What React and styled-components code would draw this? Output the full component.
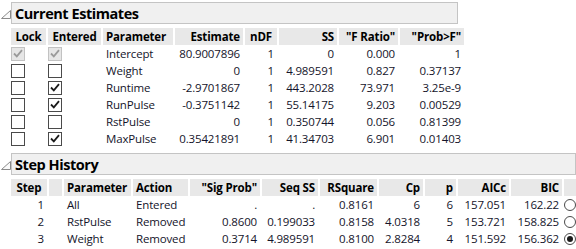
import React from 'react';
import styled, {createGlobalStyle} from "styled-components";

const GlobalStyle = createGlobalStyle`
  html, body {
    margin: 0;
    padding: 0;
    background: #ffffff;
  }
  body {
    font-family: "Open Sans", "Noto Sans", sans-serif;
    color: #14142a;
  }
`

const Page = styled.div`
  width: 576px;
  height: 249px;
  overflow: hidden;
  padding-top: 2px;
  box-sizing: border-box;
`

const Section = styled.div`
  margin-bottom: 6px;
`

const TitleRow = styled.div`
  display: flex;
  align-items: stretch;
`

const Toggle = styled.div`
  width: 11px;
  display: flex;
  align-items: center;
  justify-content: flex-start;
  padding-left: 1px;
  padding-top: 3px;
  box-sizing: border-box;
`

const TitleBar = styled.div`
  width: ${props => props.width}px;
  height: 22px;
  box-sizing: border-box;
  background: #f0f0f0;
  border: 1px solid #c4c4c4;
  display: flex;
  align-items: center;
  padding-left: 3px;
  font-weight: 700;
  font-size: 14.5px;
  letter-spacing: -0.45px;
  color: #000;
`

const Grid = styled.div`
  margin-left: 11px;
  margin-top: 4px;
  display: grid;
  grid-template-columns: ${props => props.cols};
  column-gap: 2px;
  font-size: 11.5px;
  letter-spacing: -0.15px;
`

const Head = styled.div`
  height: 17px;
  background: #e8e8e8;
  font-weight: 700;
  color: #000;
  display: flex;
  align-items: center;
  justify-content: ${props => props.align === "left" ? "flex-start" : props.align === "center" ? "center" : "flex-end"};
  padding: 0 3px;
  white-space: nowrap;
  overflow: hidden;
`

const Cell = styled.div`
  height: 17px;
  display: flex;
  align-items: center;
  justify-content: ${props => props.align === "left" ? "flex-start" : props.align === "center" ? "center" : "flex-end"};
  padding: 0 ${props => props.align === "center" ? 0 : 3}px;
  white-space: nowrap;
`

const BoxCell = styled.div`
  height: 17px;
  display: flex;
  align-items: center;
  padding-left: ${props => props.pad || 0}px;
`

const Box = styled.div`
  width: 14px;
  height: 14px;
  box-sizing: border-box;
  border: 1px solid ${props => props.disabled ? "#c2c2c2" : "#4a4a4a"};
  background: ${props => props.disabled ? "#e6e6e6" : "#fff"};
  display: flex;
  align-items: center;
  justify-content: center;
`

const Radio = styled.div`
  width: 12px;
  height: 12px;
  box-sizing: border-box;
  border-radius: 50%;
  border: 1px solid #4a4a4a;
  background: #fff;
  display: flex;
  align-items: center;
  justify-content: center;
  &::after {
    content: "";
    width: 6px;
    height: 6px;
    border-radius: 50%;
    background: ${props => props.checked ? "#1a1a1a" : "transparent"};
  }
`

const Triangle = () => (
  <svg width="10" height="9" viewBox="0 0 10 9">
    <path d="M0.5 8.5 L9.5 0.5 L9.5 8.5 Z" fill="#fafafa" stroke="#8a8a8a" strokeWidth="1"/>
  </svg>
)

const Check = ({disabled}) => (
  <svg width="10" height="9" viewBox="0 0 10 9">
    <path d="M1 4.5 L3.8 7.3 L9 1.2" fill="none" stroke={disabled ? "#9a9a9a" : "#1a1a1a"} strokeWidth="1.8"/>
  </svg>
)

const CheckBox = ({checked, disabled}) => (
  <Box disabled={disabled}>{checked && <Check disabled={disabled}/>}</Box>
)

const estimates = [
  {lock: true, entered: true, disabled: true, name: "Intercept", est: "80.9007896", ndf: "1", ss: "0", f: "0.000", p: "1"},
  {lock: false, entered: false, name: "Weight", est: "0", ndf: "1", ss: "4.989591", f: "0.827", p: "0.37137"},
  {lock: false, entered: true, name: "Runtime", est: "-2.9701867", ndf: "1", ss: "443.2028", f: "73.971", p: "3.25e-9"},
  {lock: false, entered: true, name: "RunPulse", est: "-0.3751142", ndf: "1", ss: "55.14175", f: "9.203", p: "0.00529"},
  {lock: false, entered: false, name: "RstPulse", est: "0", ndf: "1", ss: "0.350744", f: "0.056", p: "0.81399"},
  {lock: false, entered: true, name: "MaxPulse", est: "0.35421891", ndf: "1", ss: "41.34703", f: "6.901", p: "0.01403"},
]

const steps = [
  {step: "1", name: "All", action: "Entered", sig: ".", seq: ".", rsq: "0.8161", cp: "6", p: "6", aicc: "157.051", bic: "162.22", on: false},
  {step: "2", name: "RstPulse", action: "Removed", sig: "0.8600", seq: "0.199033", rsq: "0.8158", cp: "4.0318", p: "5", aicc: "153.721", bic: "158.825", on: false},
  {step: "3", name: "Weight", action: "Removed", sig: "0.3714", seq: "4.989591", rsq: "0.8100", cp: "2.8284", p: "4", aicc: "151.592", bic: "156.362", on: true},
]

const App = () => {
    return (
        <Page>
            <GlobalStyle/>
            <Section>
                <TitleRow>
                    <Toggle><Triangle/></Toggle>
                    <TitleBar width={447}>Current Estimates</TitleBar>
                </TitleRow>
                <Grid cols="35px 53px 70px 68px 32px 58px 59px 64px">
                    <Head align="center">Lock</Head>
                    <Head align="center">Entered</Head>
                    <Head align="left">Parameter</Head>
                    <Head>Estimate</Head>
                    <Head align="center">nDF</Head>
                    <Head>SS</Head>
                    <Head>"F Ratio"</Head>
                    <Head>"Prob&gt;F"</Head>
                    {estimates.map(r => (
                        <React.Fragment key={r.name}>
                            <BoxCell><CheckBox checked={r.lock} disabled={r.disabled}/></BoxCell>
                            <BoxCell><CheckBox checked={r.entered} disabled={r.disabled}/></BoxCell>
                            <Cell align="left">{r.name}</Cell>
                            <Cell>{r.est}</Cell>
                            <Cell>{r.ndf}</Cell>
                            <Cell>{r.ss}</Cell>
                            <Cell>{r.f}</Cell>
                            <Cell>{r.p}</Cell>
                        </React.Fragment>
                    ))}
                </Grid>
            </Section>
            <Section>
                <TitleRow>
                    <Toggle><Triangle/></Toggle>
                    <TitleBar width={566}>Step History</TitleBar>
                </TitleRow>
                <Grid cols="36px 13px 67px 55px 70px 56px 57px 44px 31px 51px 51px 22px">
                    <Head align="center">Step</Head>
                    <Head/>
                    <Head align="left">Parameter</Head>
                    <Head align="left">Action</Head>
                    <Head>"Sig Prob"</Head>
                    <Head>Seq SS</Head>
                    <Head>RSquare</Head>
                    <Head>Cp</Head>
                    <Head>p</Head>
                    <Head>AICc</Head>
                    <Head>BIC</Head>
                    <Head/>
                    {steps.map(r => (
                        <React.Fragment key={r.step}>
                            <Cell>{r.step}</Cell>
                            <Cell/>
                            <Cell align="left">{r.name}</Cell>
                            <Cell align="left">{r.action}</Cell>
                            <Cell>{r.sig}</Cell>
                            <Cell>{r.seq}</Cell>
                            <Cell>{r.rsq}</Cell>
                            <Cell>{r.cp}</Cell>
                            <Cell>{r.p}</Cell>
                            <Cell>{r.aicc}</Cell>
                            <Cell>{r.bic}</Cell>
                            <BoxCell><Radio checked={r.on}/></BoxCell>
                        </React.Fragment>
                    ))}
                </Grid>
            </Section>
        </Page>
    );
}

export default App;
